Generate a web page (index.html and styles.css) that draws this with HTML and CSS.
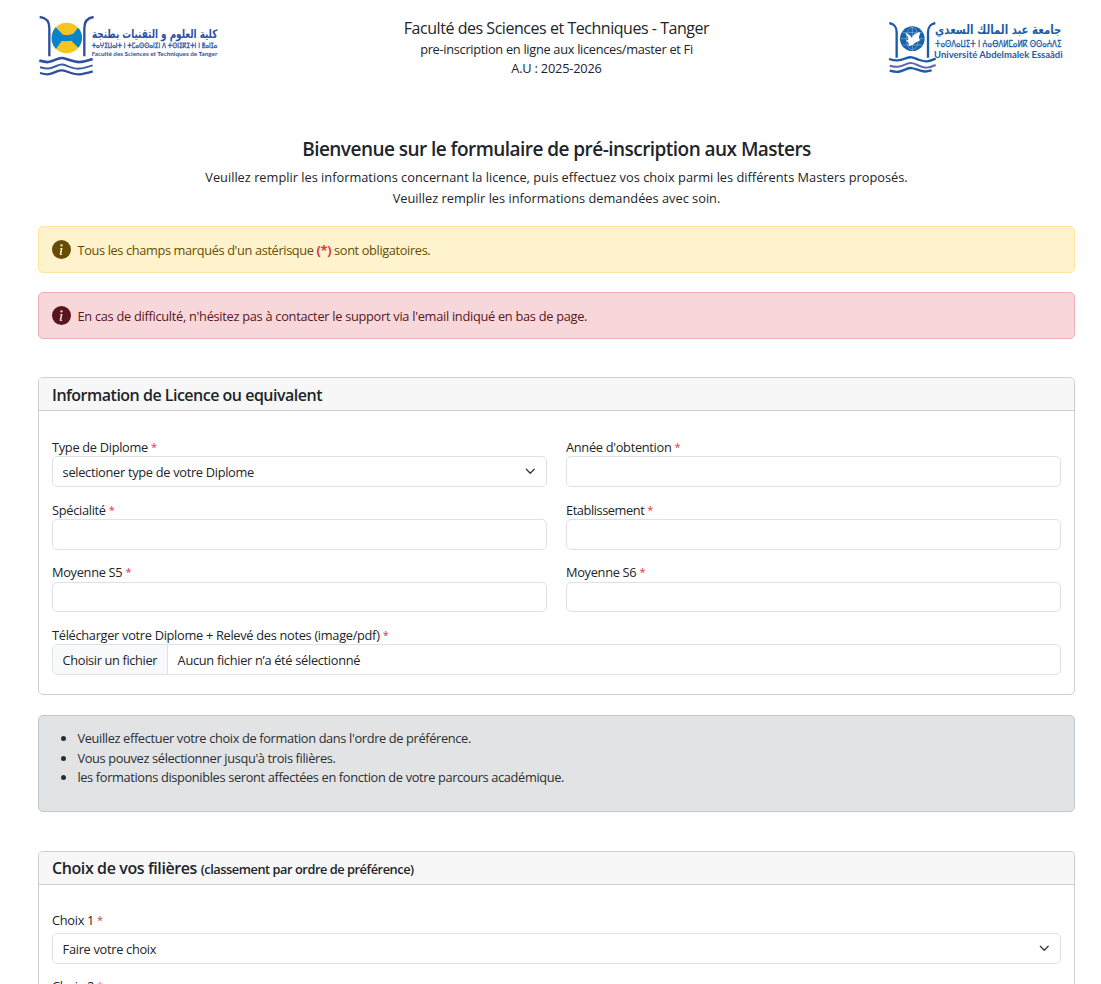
FILE: index.html
```
<!DOCTYPE html>
<html lang="fr">
<head>
<meta charset="utf-8">
<title>Pré-inscription aux Masters</title>
<link rel="stylesheet" href="styles.css">
</head>
<body>
<header class="site-header">
  <svg class="logo" viewBox="0 0 600 240" role="img" aria-label="Faculté des Sciences et Techniques de Tanger">
    <circle cx="110" cy="99" r="46" fill="#f4c522"/>
    <path d="M77 67C62 83 60 115 78 132L95 108 106 109 124 107 145 128C160 112 160 83 144 68L130 86 113 91 99 89Z" fill="#0784cb"/>
    <g fill="none" stroke="#2d4f9d">
      <path d="M29 36C51 39 58 50 58 69V154M191 36C170 39 163 50 163 69V154" stroke-width="7"/>
      <path d="M28 167C52 173 58 173 77 164S103 160 121 166 150 175 188 162" stroke-width="8"/>
      <path d="M30 187C54 193 59 192 79 183S105 181 123 187 151 193 188 181" stroke-width="6" stroke="#3c5da7"/>
      <path d="M30 204C54 211 61 208 79 200S105 198 123 204 151 210 188 199" stroke-width="7"/>
    </g>
    <g fill="#2d50a0">
      <text class="logo-arabic" x="186" y="98" font-size="36" font-weight="bold" textLength="376" lengthAdjust="spacingAndGlyphs">كلية العلوم و التقنيات بطنجة</text>
      <text class="logo-arabic" x="185" y="130" font-size="22" textLength="377" lengthAdjust="spacingAndGlyphs" stroke="#2d50a0" stroke-width="1">ⵜⴰⵖⵉⵡⴰⵏⵜ ⵏ ⵜⵎⴰⵙⵙⴰⵏⵉⵏ ⴷ ⵜⵙⵏⵉⴽⵉⵜⵏ ⵏ ⵟⴰⵏⵊⴰ</text>
      <text class="logo-sans" x="185" y="152" font-size="19" font-weight="bold" textLength="377" lengthAdjust="spacingAndGlyphs">Faculté des Sciences et Techniques de Tanger</text>
    </g>
  </svg>
  <div class="heading">
    <div class="school"><span>Faculté des Sciences et Techniques - Tanger</span></div>
    <div class="sub">pre-inscription en ligne aux licences/master et Fi</div>
    <div class="year">A.U : 2025-2026</div>
  </div>
  <svg class="logo" viewBox="0 0 600 240" role="img" aria-label="Université Abdelmalek Essaâdi">
    <circle cx="97" cy="101" r="37" fill="#1763aa"/>
    <g fill="none" stroke="#8bb1d8" stroke-width="2"><ellipse cx="97" cy="101" rx="18" ry="34"/><path d="M97 66v70M63 101h68M68 83h58M68 120h58"/></g>
    <path d="M75 84C88 87 93 94 96 100C99 88 107 84 121 82C118 96 112 101 122 105C113 110 106 111 99 119L85 124C89 117 86 111 78 107L85 104C85 96 80 90 75 84Z" fill="#fff"/>
    <g fill="none" stroke="#1a5da6">
      <path d="M28 54C44 58 50 65 50 82V158M166 54C150 58 144 65 144 82V158" stroke-width="7"/>
      <path d="M27 162C49 169 57 167 77 160S102 159 119 165 145 171 167 161" stroke-width="7"/>
      <path d="M29 182C52 188 59 186 77 178S102 176 119 183 144 190 167 180" stroke-width="6" stroke="#6267b1"/>
      <path d="M29 197C52 203 59 201 77 193S102 191 119 196 139 200 155 196" stroke-width="7"/>
    </g>
    <g fill="#1b5da7">
      <text class="logo-arabic" x="165" y="88" font-size="38" font-weight="bold" textLength="379" lengthAdjust="spacingAndGlyphs">جامعة عبد المالك السعدي</text>
      <text class="logo-arabic" x="165" y="127" font-size="27" textLength="379" stroke="#1b5da7" stroke-width="1" lengthAdjust="spacingAndGlyphs">ⵜⴰⵙⴷⴰⵡⵉⵜ ⵏ ⵄⴰⴱⴷⵍⵎⴰⵍⴽ ⵙⵙⴰⵄⴷⵉ</text>
      <text class="logo-sans" x="162" y="158" font-size="28" font-weight="bold" textLength="386" lengthAdjust="spacingAndGlyphs">Université Abdelmalek Essaâdi</text>
    </g>
  </svg>
</header>

<main class="page">
  <section class="intro">
    <h1>Bienvenue sur le formulaire de pré-inscription aux Masters</h1>
    <p>Veuillez remplir les informations concernant la licence, puis effectuez vos choix parmi les différents Masters proposés.<br>Veuillez remplir les informations demandées avec soin.</p>
  </section>

  <div class="alert warning">
    <svg class="info" viewBox="0 0 16 16"><path fill="currentColor" d="M8 16A8 8 0 1 0 8 0a8 8 0 0 0 0 16m.93-9.412-1 4.705c-.07.34.029.533.304.533.194 0 .487-.07.686-.246l-.088.416c-.287.346-.92.598-1.465.598-.703 0-1.002-.422-.808-1.319l.738-3.468c.064-.293.006-.399-.287-.47l-.451-.081.082-.381 2.29-.287zM8 5.5a1 1 0 1 1 0-2 1 1 0 0 1 0 2"/></svg>
    <span class="warning-text">Tous les champs marqués d'un astérisque <b>(*)</b> sont obligatoires.</span>
  </div>
  <div class="alert danger">
    <svg class="info" viewBox="0 0 16 16"><path fill="currentColor" d="M8 16A8 8 0 1 0 8 0a8 8 0 0 0 0 16m.93-9.412-1 4.705c-.07.34.029.533.304.533.194 0 .487-.07.686-.246l-.088.416c-.287.346-.92.598-1.465.598-.703 0-1.002-.422-.808-1.319l.738-3.468c.064-.293.006-.399-.287-.47l-.451-.081.082-.381 2.29-.287zM8 5.5a1 1 0 1 1 0-2 1 1 0 0 1 0 2"/></svg>
    <span>En cas de difficulté, n'hésitez pas à contacter le support via l'email indiqué en bas de page.</span>
  </div>

  <section class="card">
    <h2 class="card-title">Information de Licence ou equivalent</h2>
    <div class="fields">
      <div class="field"><label>Type de Diplome <i>*</i></label>
        <div class="control select"><span>selectioner type de votre Diplome</span><svg class="chevron" viewBox="0 0 16 16"><path d="m2 5 6 6 6-6"/></svg></div></div>
      <div class="field"><label for="annee">Année d'obtention <i>*</i></label><input class="control" id="annee"></div>
      <div class="field"><label for="specialite">Spécialité <i>*</i></label><input class="control" id="specialite"></div>
      <div class="field"><label for="etab" class="tight">Etablissement <i>*</i></label><input class="control" id="etab"></div>
      <div class="field"><label for="s5">Moyenne S5 <i>*</i></label><input class="control" id="s5"></div>
      <div class="field"><label for="s6">Moyenne S6 <i>*</i></label><input class="control" id="s6"></div>
      <div class="field wide"><label>Télécharger votre Diplome + Relevé des notes (image/pdf) <i>*</i></label>
        <div class="control file"><span class="file-button">Choisir un fichier</span><span class="file-name">Aucun fichier n’a été sélectionné</span></div></div>
    </div>
  </section>

  <ul class="notes">
    <li>Veuillez effectuer votre choix de formation dans l'ordre de préférence.</li>
    <li>Vous pouvez sélectionner jusqu'à trois filières.</li>
    <li>les formations disponibles seront affectées en fonction de votre parcours académique.</li>
  </ul>

  <section class="card choices">
    <h2 class="card-title">Choix de vos filières <small>(classement par ordre de préférence)</small></h2>
    <div class="choice-list">
      <div class="field"><label>Choix 1 <i>*</i></label>
        <div class="control select"><span>Faire votre choix</span><svg class="chevron" viewBox="0 0 16 16"><path d="m2 5 6 6 6-6"/></svg></div></div>
      <div class="field"><label>Choix 2 <i>*</i></label></div>
    </div>
  </section>
</main>
</body>
</html>
```
FILE: styles.css
```
* { box-sizing: border-box; }
html { height: 984px; overflow: hidden; }
body {
  margin: 0;
  height: 984px;
  overflow: hidden;
  background: #fff;
  color: #212529;
  font: 12.8px/19.2px "Open Sans", "Noto Sans", sans-serif;
  letter-spacing: -0.3px;
}
.site-header {
  display: flex;
  justify-content: space-between;
  height: 138px;
  padding: 5px 21px 0 30px;
}
.logo { width: 200px; height: 80px; overflow: visible; }
.logo text { letter-spacing: 0; }
.logo-arabic { font-family: "DejaVu Sans", sans-serif; }
.logo-sans { font-family: Lato, sans-serif; }
.heading { padding: 11px 0 0 3px; text-align: center; }
.school { font-size: 16px; line-height: 24px; letter-spacing: -0.46px; }
.sub { line-height: 19px; }
.year { line-height: 19px; letter-spacing: -0.2px; }
.page { padding: 0 26px 0 38px; }
.intro { height: 88px; text-align: center; }
h1 { margin: 0 0 5px; font-size: 19px; line-height: 23px; font-weight: 600; letter-spacing: -0.54px; }
.intro p { margin: 0; padding-top: 1px; line-height: 21px; letter-spacing: 0; }
.alert {
  display: flex;
  align-items: center;
  gap: 6px;
  height: 47px;
  margin-bottom: 19px;
  padding: 0 13px;
  border: 1px solid;
  border-radius: 5px;
}
.alert span { padding: 2px 0 0 0.5px; letter-spacing: -0.285px; }
.alert .warning-text { letter-spacing: -0.37px; }
.info { width: 19px; height: 19px; }
.warning { color: #664d03; background: #fff3cd; border-color: #ffe69c; }
.warning b { color: #dc3545; }
.danger { color: #58151c; background: #f8d7da; border-color: #f1aeb5; margin-bottom: 38px; }
.card { height: 318px; border: 1px solid #cfcfcf; border-radius: 5px; }
.card-title {
  margin: 0;
  height: 33px;
  padding: 6px 13px 0;
  border-bottom: 1px solid #cfcfcf;
  border-radius: 4px 4px 0 0;
  background: #f7f7f7;
  font-size: 16px;
  line-height: 23px;
  font-weight: 600;
  letter-spacing: -0.5px;
}
.card-title small { font-size: 12.8px; letter-spacing: -0.46px; }
.fields {
  display: grid;
  grid-template-columns: 1fr 1fr;
  column-gap: 19px;
  row-gap: 12.8px;
  padding: 26px 13px 0;
}
.field { display: flex; flex-direction: column; }
.wide { grid-column: 1 / -1; }
.field label { height: 19.2px; padding-top: 1px; }
.field .tight { letter-spacing: -0.43px; }
label i { color: #dc3545; font-size: 11px; font-style: normal; line-height: 1; vertical-align: 1px; }
.control {
  width: 100%;
  height: 30.7px;
  border: 1px solid #dee2e6;
  border-radius: 5px;
  background: #fff;
}
.select { display: flex; align-items: center; justify-content: space-between; padding: 0 10.5px 0 9.6px; }
.select span { padding-top: 2px; }
.chevron { width: 10.5px; height: 10.5px; fill: none; stroke: #343a40; stroke-width: 2; stroke-linecap: round; stroke-linejoin: round; }
.file { display: flex; align-items: stretch; overflow: hidden; line-height: 31px; }
.file-button { width: 115px; padding-left: 9.6px; border-right: 1px solid #dee2e6; background: #f8f9fa; letter-spacing: -0.35px; }
.file-name { padding-left: 9.6px; }
.notes {
  height: 97px;
  margin: 20px 0 39px;
  padding: 13px 13px 0 38.4px;
  border: 1px solid #c4c8cb;
  border-radius: 5px;
  background: #e2e3e5;
  color: #2b2f32;
  line-height: 19.5px;
  letter-spacing: -0.35px;
}
.choices { height: 133px; border-bottom: 0; border-radius: 5px 5px 0 0; }
.choices .card-title { padding-top: 5px; letter-spacing: -0.4px; }
.choice-list { display: flex; flex-direction: column; gap: 12.8px; padding: 25px 13px 0; }
.choice-list .field label { height: 23px; }
```
